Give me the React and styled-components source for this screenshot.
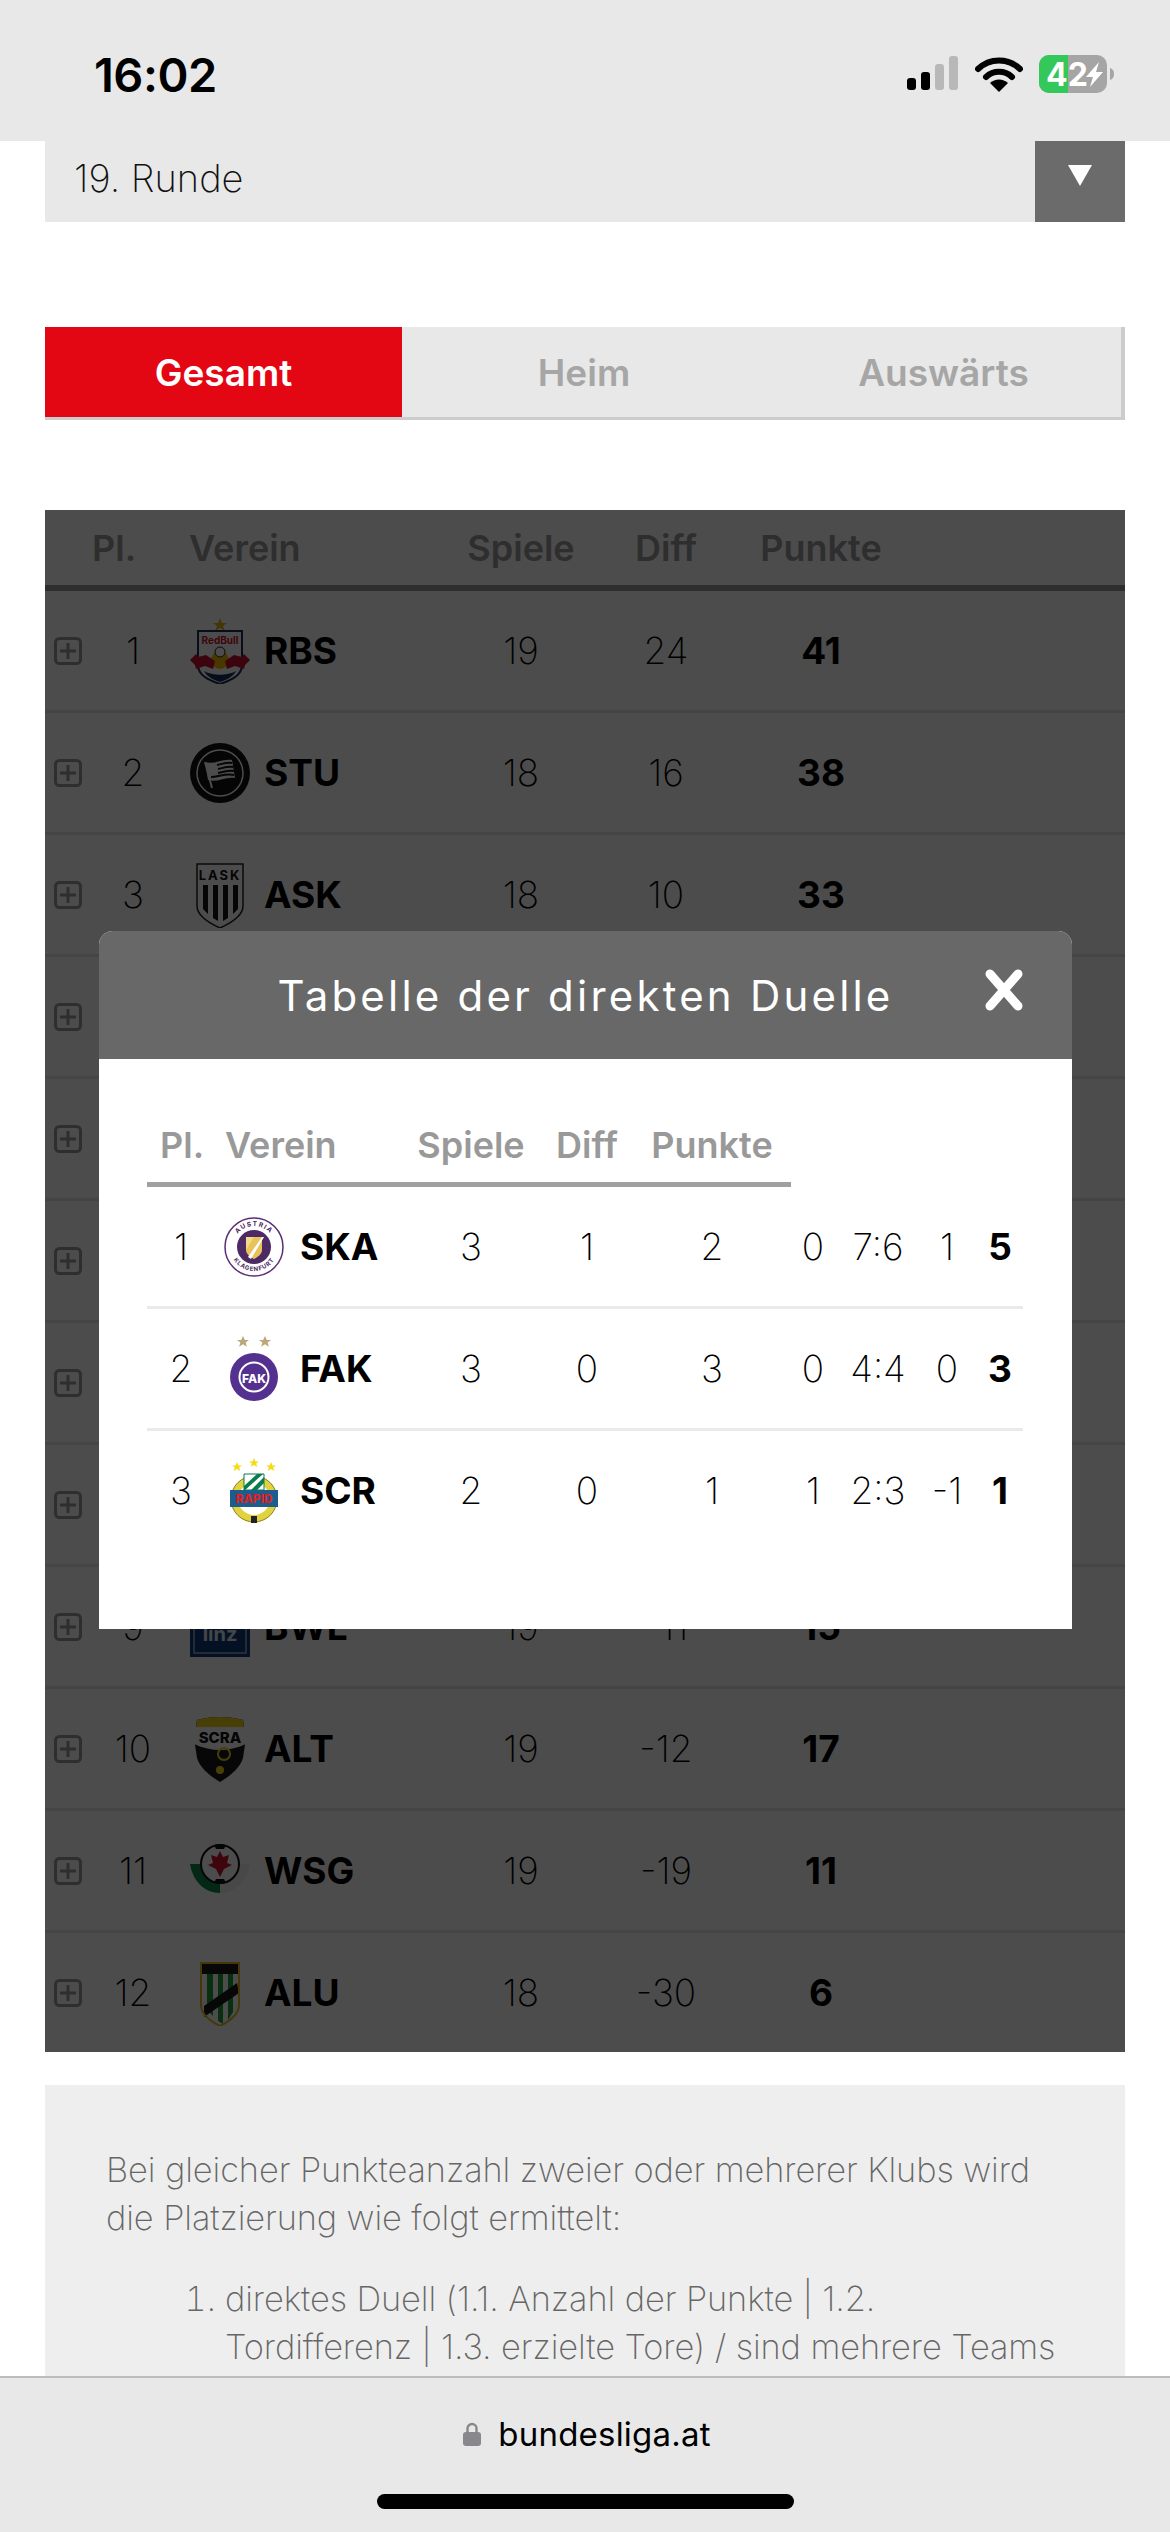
import styled, { createGlobalStyle } from "styled-components";

const GlobalStyle = createGlobalStyle`
  html, body {
    margin: 0;
    padding: 0;
    background: #fff;
    font-family: "Inter", "Liberation Sans", sans-serif;
  }
`;

const Page = styled.div`
  width: 1170px;
  height: 2532px;
  display: flex;
  flex-direction: column;
  overflow: hidden;
  background: #fff;
`;

const StatusBar = styled.div`
  flex: none;
  height: 134px;
  padding: 7px 55px 0 94px;
  display: flex;
  align-items: center;
  justify-content: space-between;
  background: #e8e8e8;
`;

const Clock = styled.div`
  font-size: 47px;
  font-weight: 600;
  color: #000;
  letter-spacing: -0.5px;
`;

const StatusIcons = styled.div`
  display: flex;
  align-items: center;
  gap: 16px;
`;

const Content = styled.div`
  flex: 1;
  min-height: 0;
  overflow: hidden;
  padding: 0 45px;
`;

const RoundSelect = styled.div`
  height: 81px;
  display: flex;
  align-items: center;
  justify-content: space-between;
  background: #e8e8e8;
  padding-left: 29px;
  font-size: 38px;
  font-weight: 250;
  color: #111;
`;

const RoundLabel = styled.span`
  margin-bottom: 8px;
`;

const SelectButton = styled.div`
  width: 90px;
  height: 100%;
  display: flex;
  align-items: flex-start;
  justify-content: center;
  padding-top: 24px;
  box-sizing: border-box;
  background: #6b6b6b;
  &::after {
    content: "";
    border-left: 12px solid transparent;
    border-right: 12px solid transparent;
    border-top: 21px solid #fff;
  }
`;

const Tabs = styled.div`
  margin-top: 105px;
  height: 93px;
  display: grid;
  grid-template-columns: 357px 364px 1fr;
  box-sizing: border-box;
  background: #e8e8e8;
  border-right: 4px solid #ccc;
  border-bottom: 3px solid #ccc;
`;

const Tab = styled.div`
  display: flex;
  align-items: center;
  justify-content: center;
  font-size: 37px;
  font-weight: 600;
  color: ${(p) => (p.$active ? "#fff" : "#a6a6a6")};
  background: ${(p) => (p.$active ? "#e30613" : "transparent")};
`;

const TableWrap = styled.div`
  position: relative;
  margin-top: 90px;
  background: #fff;
`;

const Overlay = styled.div`
  position: absolute;
  inset: 0;
  background: rgba(0, 0, 0, 0.7);
`;

const TableHead = styled.div`
  display: grid;
  grid-template-columns: 53px 70px 283px 140px 150px 160px 1fr;
  height: 75px;
  align-items: center;
  border-bottom: 6px solid #999;
  font-size: 36px;
  font-weight: 600;
  color: #999;
`;

const HeadRank = styled.div`
  grid-column: 1 / 3;
  padding-left: 47px;
`;

const HeadClub = styled.div`
  padding-left: 21px;
`;

const HeadCell = styled.div`
  display: flex;
  justify-content: center;
`;

const TableRow = styled.div`
  display: grid;
  grid-template-columns: 53px 70px 283px 140px 150px 160px 1fr;
  height: 119px;
  align-items: center;
  font-size: 37px;
  font-weight: 200;
  color: #000;
  border-bottom: ${(p) => (p.$last ? "0" : "3px solid #e8e8e8")};
`;

const Toggle = styled.svg`
  width: 28px;
  height: 28px;
  margin-left: 9px;
`;

const Cell = styled.div`
  display: flex;
  justify-content: center;
  white-space: nowrap;
`;

const Strong = styled(Cell)`
  font-weight: 700;
`;

const Club = styled.div`
  display: flex;
  align-items: center;
  gap: ${(p) => p.$gap}px;
  padding-left: ${(p) => p.$indent}px;
  font-weight: 700;
  font-size: 37px;
`;

const LogoBox = styled.svg`
  flex: none;
  width: 60px;
  height: 66px;
`;

const Modal = styled.div`
  position: absolute;
  top: 421px;
  left: 54px;
  width: 973px;
  height: 698px;
  background: #fff;
  border-radius: 14px 14px 0 0;
  overflow: hidden;
`;

const ModalHeader = styled.div`
  height: 128px;
  display: grid;
  grid-template-columns: 1fr auto 1fr;
  align-items: center;
  background: #686868;
  color: #fff;
  font-size: 42px;
  font-weight: 400;
  letter-spacing: 3.2px;
`;

const ModalTitle = styled.div`
  grid-column: 2;
  white-space: nowrap;
`;

const CloseIcon = styled.svg`
  grid-column: 3;
  justify-self: end;
  width: 40px;
  height: 42px;
  margin-right: 48px;
  margin-bottom: 10px;
`;

const ModalBody = styled.div`
  padding: 48px 49px 0 48px;
`;

const DuelHead = styled.div`
  width: 644px;
  height: 75px;
  display: grid;
  grid-template-columns: 68px 206px 100px 132px 118px;
  align-items: center;
  border-bottom: 5px solid #a0a0a0;
  font-size: 36px;
  font-weight: 600;
  color: #999;
`;

const DuelHeadRank = styled.div`
  padding-left: 13px;
`;

const DuelHeadClub = styled.div`
  padding-left: 10px;
`;

const DuelRow = styled.div`
  display: grid;
  grid-template-columns: 68px 206px 100px 132px 118px 84px 46px 92px 14px;
  height: 119px;
  align-items: center;
  font-size: 37px;
  font-weight: 200;
  color: #000;
  border-bottom: ${(p) => (p.$last ? "0" : "3px solid #eaeaea")};
`;

const RulesPanel = styled.div`
  margin-top: 33px;
  padding: 61px 40px 0 61px;
  height: 400px;
  background: #eee;
  font-size: 34.4px;
  font-weight: 200;
  line-height: 48px;
  letter-spacing: -0.1px;
  color: #666;
`;

const RulesText = styled.p`
  margin: 0;
`;

const RulesList = styled.ol`
  margin: 33px 0 0;
  padding-left: 119px;
`;

const BrowserBar = styled.div`
  flex: none;
  height: 154px;
  border-top: 2px solid #bdbdbd;
  background: #e8e8e8;
  display: flex;
  flex-direction: column;
  align-items: center;
`;

const Address = styled.div`
  margin-top: 36px;
  margin-left: 4px;
  display: flex;
  align-items: center;
  gap: 17px;
  font-size: 33px;
  font-weight: 400;
  color: #000;
  letter-spacing: 0.2px;
`;

const HomeIndicator = styled.div`
  margin-top: 40px;
  width: 417px;
  height: 15px;
  border-radius: 8px;
  background: #000;
`;

const SignalIcon = () => (
  <svg width="52" height="36" viewBox="0 0 52 36">
    <rect x="0" y="22" width="9" height="12" rx="3" fill="#000" />
    <rect x="14" y="16" width="9" height="18" rx="3" fill="#000" />
    <rect x="28" y="8" width="9" height="26" rx="3" fill="#b8b8b8" />
    <rect x="42" y="0" width="9" height="34" rx="3" fill="#b8b8b8" />
  </svg>
);

const WifiIcon = () => (
  <svg width="48" height="36" viewBox="0 0 48 36">
    <path d="M3 13a30 30 0 0 1 42 0" fill="none" stroke="#000" strokeWidth="6" strokeLinecap="round" />
    <path d="M11 21a19 19 0 0 1 26 0" fill="none" stroke="#000" strokeWidth="6" strokeLinecap="round" />
    <path d="M24 36l-9-9a13 13 0 0 1 18 0z" fill="#000" />
  </svg>
);

const BatteryIcon = () => (
  <svg width="76" height="38" viewBox="0 0 76 38">
    <rect x="0" y="0" width="68" height="38" rx="10" fill="#a5a5a5" />
    <path d="M10 0h19v38H10a10 10 0 0 1-10-10V10A10 10 0 0 1 10 0z" fill="#34c759" />
    <path d="M71 13c3 1 4 3 4 6s-1 5-4 6z" fill="#a5a5a5" />
    <text x="7" y="31" fontSize="32" fontWeight="700" fill="#fff" fontFamily="Inter, sans-serif">42</text>
    <path d="M60 7L47 22h7l-3 10 13-15h-7z" fill="#fff" />
  </svg>
);

const LockIcon = () => (
  <svg width="18" height="24" viewBox="0 0 18 24">
    <path d="M4.5 11V6.5a4.5 4.5 0 0 1 9 0V11" fill="none" stroke="#88888c" strokeWidth="2.4" />
    <rect x="0" y="10" width="18" height="14" rx="3" fill="#88888c" />
  </svg>
);

const RbsLogo = () => (
  <LogoBox viewBox="0 0 60 66">
    <path d="M30 0l2 5h5l-4 3 2 5-5-3-5 3 2-5-4-3h5z" fill="#e6b422" />
    <path d="M8 13h44v34c0 10-10 15-22 19C18 62 8 57 8 47z" fill="#fff" stroke="#1d2d5c" strokeWidth="2" />
    <text x="30" y="26" textAnchor="middle" fontSize="10" fontWeight="700" fill="#d0112b" fontFamily="Inter, sans-serif">RedBull</text>
    <circle cx="30" cy="42" r="9" fill="#f5b800" />
    <circle cx="30" cy="34" r="5" fill="#fff" stroke="#222" strokeWidth="1" />
    <path d="M0 42l6-6 2 3 8-2 9 6-2 8-8-3-9 3-1-4z" fill="#c8102e" />
    <path d="M60 42l-6-6-2 3-8-2-9 6 2 8 8-3 9 3 1-4z" fill="#c8102e" />
    <path d="M14 53c9 5 23 5 32 0-3 6-10 9-16 11-6-2-13-5-16-11z" fill="#1d2d5c" />
  </LogoBox>
);

const StuLogo = () => (
  <LogoBox viewBox="0 0 60 66">
    <circle cx="30" cy="33" r="30" fill="#111" />
    <circle cx="30" cy="33" r="23" fill="none" stroke="#fff" strokeWidth="1.5" />
    <path d="M15 22c9 3 18-4 27-2l3 18c-9-2-18 5-27 2z" fill="#fff" />
    <path d="M27 25c5-1 10-3 15-2M28 29c5-1 10-3 15-2M28 33c5-1 11-3 16-2M21 37c7 0 15-4 23-2" stroke="#111" strokeWidth="2" fill="none" />
    <path d="M15 22l7 26" stroke="#fff" strokeWidth="2" />
  </LogoBox>
);

const AskLogo = () => (
  <LogoBox viewBox="0 0 60 66">
    <path d="M7 2h46v42c0 9-12 17-23 22C19 61 7 53 7 44z" fill="#fff" stroke="#222" strokeWidth="1.5" />
    <text x="30" y="18" textAnchor="middle" fontSize="13" fontWeight="700" letterSpacing="2" fill="#111" fontFamily="Inter, sans-serif">LASK</text>
    <path d="M13 23h5v29l-5-5zM23 23h5v36l-5-3zM33 23h5v33l-5 3zM43 23h5v24l-5 5z" fill="#111" />
  </LogoBox>
);

const BwlLogo = () => (
  <LogoBox viewBox="0 0 60 66">
    <rect x="0" y="3" width="60" height="60" fill="#0f3b7d" />
    <rect x="4" y="7" width="52" height="52" fill="none" stroke="#dfe8f3" strokeWidth="1" />
    <text x="30" y="47" textAnchor="middle" fontSize="20" fontWeight="700" fill="#dfe8f3" fontFamily="Inter, sans-serif">linz</text>
  </LogoBox>
);

const AltLogo = () => (
  <LogoBox viewBox="0 0 60 66">
    <path d="M7 4c15-4 31-4 46 0l3 18-3 20c-3 10-13 18-23 24C20 60 10 52 7 42L4 22z" fill="#181818" />
    <path d="M7 4c15-4 31-4 46 0l1 7H6z" fill="#f2d21b" />
    <path d="M4 11h52v17C38 36 22 36 4 28z" fill="#fff" />
    <text x="30" y="27" textAnchor="middle" fontSize="15" fontWeight="800" fill="#111" fontFamily="Inter, sans-serif">SCRA</text>
    <circle cx="34" cy="38" r="6" fill="none" stroke="#f2d21b" strokeWidth="2" />
    <circle cx="30" cy="54" r="4" fill="#f2d21b" />
  </LogoBox>
);

const WsgLogo = () => (
  <LogoBox viewBox="0 0 60 66">
    <path d="M0 26c3 18 15 29 30 29V26z" fill="#0a8a4a" />
    <path d="M60 26c-3 18-15 29-30 29V26z" fill="#f2f2f2" />
    <circle cx="30" cy="26" r="19" fill="#fff" stroke="#111" strokeWidth="2" />
    <path d="M30 13l3 6 6-2-2 8 5 2-8 4-4 8-4-8-8-4 5-2-2-8 6 2z" fill="#d0112b" />
    <path d="M24 7l6-1 6 1-2 4h-8zM24 45l6 1 6-1-2-4h-8z" fill="#111" />
  </LogoBox>
);

const AluLogo = () => (
  <LogoBox viewBox="0 0 60 66">
    <path d="M11 3h38v42c0 9-9 16-19 21C20 61 11 54 11 45z" fill="#fff" />
    <path d="M17 14h6v42l-6-6zM28 14h5v50l-5-3zM38 14h5v38l-5 8z" fill="#1f9e3a" />
    <path d="M11 3h38v11H11z" fill="#181818" />
    <path d="M14 46l33-23 2 10-35 24z" fill="#181818" />
    <path d="M11 3h38v42c0 9-9 16-19 21C20 61 11 54 11 45z" fill="none" stroke="#e8b81c" strokeWidth="2" />
  </LogoBox>
);

const SkaLogo = () => (
  <LogoBox viewBox="0 0 60 66">
    <circle cx="30" cy="33" r="29" fill="#fff" stroke="#5a2f73" strokeWidth="1.5" />
    <defs>
      <path id="skaTop" d="M9 33a21 21 0 0 1 42 0" />
      <path id="skaBottom" d="M6 33a24 24 0 0 0 48 0" />
    </defs>
    <text fontSize="6.5" fontWeight="700" letterSpacing="1.2" fill="#4d2a63" fontFamily="Inter, sans-serif">
      <textPath href="#skaTop" startOffset="50%" textAnchor="middle">AUSTRIA</textPath>
    </text>
    <text fontSize="6" fontWeight="700" letterSpacing="0.8" fill="#4d2a63" fontFamily="Inter, sans-serif">
      <textPath href="#skaBottom" startOffset="50%" textAnchor="middle">KLAGENFURT</textPath>
    </text>
    <circle cx="30" cy="33" r="17" fill="#4d2a63" />
    <path d="M22 23h16v13c0 4-4 7-8 9-4-2-8-5-8-9z" fill="#e9c25a" />
    <path d="M24 43l14-20h2L27 45z" fill="#fff" />
    <path d="M22 23h8L22 36z" fill="#f3d98a" />
  </LogoBox>
);

const FakLogo = () => (
  <LogoBox viewBox="0 0 60 66">
    <path d="M19 0l1.8 4H25l-3.4 2.6 1.3 4.2L19 8.3l-3.9 2.5 1.3-4.2L13 4h4.2zM41 0l1.8 4H47l-3.4 2.6 1.3 4.2L41 8.3l-3.9 2.5 1.3-4.2L35 4h4.2z" fill="#bba77a" />
    <circle cx="30" cy="41" r="24" fill="#54318f" />
    <circle cx="30" cy="41" r="15.5" fill="#fff" />
    <circle cx="30" cy="41" r="13.5" fill="#54318f" />
    <text x="30" y="47" textAnchor="middle" fontSize="12" fontWeight="800" fill="#fff" fontFamily="Inter, sans-serif">FAK</text>
  </LogoBox>
);

const ScrLogo = () => (
  <LogoBox viewBox="0 0 60 66">
    <path d="M13 4l1.5 3.4H18l-2.8 2.2 1 3.4-3.2-2-3.2 2 1-3.4L8 7.4h3.5zM30 0l1.5 3.4H35l-2.8 2.2 1 3.4-3.2-2-3.2 2 1-3.4L25 3.4h3.5zM47 4l1.5 3.4H52l-2.8 2.2 1 3.4-3.2-2-3.2 2 1-3.4L42 7.4h3.5z" fill="#f2dc1a" />
    <circle cx="30" cy="41" r="23" fill="#e2d23e" stroke="#8a7d1e" strokeWidth="1" />
    <circle cx="30" cy="41" r="16" fill="#fff" />
    <path d="M20 16h20v16H20z" fill="#fff" stroke="#0a7d4d" strokeWidth="1" />
    <path d="M20 28L33 16h6L20 33zM27 32l13-13v6l-7 7z" fill="#0a7d4d" />
    <rect x="6" y="32" width="48" height="17" fill="#1c5d8e" />
    <text x="30" y="45" textAnchor="middle" fontSize="12" fontWeight="800" fill="#e02020" fontFamily="Inter, sans-serif">RAPID</text>
    <rect x="27" y="58" width="6" height="7" fill="#222" />
  </LogoBox>
);

const logos = {
  RBS: RbsLogo,
  STU: StuLogo,
  ASK: AskLogo,
  BWL: BwlLogo,
  ALT: AltLogo,
  WSG: WsgLogo,
  ALU: AluLogo,
  SKA: SkaLogo,
  FAK: FakLogo,
  SCR: ScrLogo,
};

// rows 4 to 8 sit behind the dialog, only their toggles can be seen
const standings = [
  { rank: 1, club: "RBS", games: 19, diff: 24, points: 41 },
  { rank: 2, club: "STU", games: 18, diff: 16, points: 38 },
  { rank: 3, club: "ASK", games: 18, diff: 10, points: 33 },
  { id: 4 },
  { id: 5 },
  { id: 6 },
  { id: 7 },
  { id: 8 },
  { rank: 9, club: "BWL", games: 19, diff: -11, points: 15 },
  { rank: 10, club: "ALT", games: 19, diff: -12, points: 17 },
  { rank: 11, club: "WSG", games: 19, diff: -19, points: 11 },
  { rank: 12, club: "ALU", games: 18, diff: -30, points: 6 },
];

const duels = [
  { rank: 1, club: "SKA", games: 3, s: 1, u: 2, n: 0, goals: "7:6", diff: 1, points: 5 },
  { rank: 2, club: "FAK", games: 3, s: 0, u: 3, n: 0, goals: "4:4", diff: 0, points: 3 },
  { rank: 3, club: "SCR", games: 2, s: 0, u: 1, n: 1, goals: "2:3", diff: -1, points: 1 },
];

const ClubLabel = ({ club, gap, indent }) => {
  const Logo = logos[club];
  return (
    <Club $gap={gap} $indent={indent}>
      {Logo && <Logo />}
      {club}
    </Club>
  );
};

const App = () => {
  return (
    <Page>
      <GlobalStyle />
      <StatusBar>
        <Clock>16:02</Clock>
        <StatusIcons>
          <SignalIcon />
          <WifiIcon />
          <BatteryIcon />
        </StatusIcons>
      </StatusBar>
      <Content>
        <RoundSelect>
          <RoundLabel>19. Runde</RoundLabel>
          <SelectButton />
        </RoundSelect>
        <Tabs>
          <Tab $active>Gesamt</Tab>
          <Tab>Heim</Tab>
          <Tab>Auswärts</Tab>
        </Tabs>
        <TableWrap>
          <TableHead>
            <HeadRank>Pl.</HeadRank>
            <HeadClub>Verein</HeadClub>
            <HeadCell>Spiele</HeadCell>
            <HeadCell>Diff</HeadCell>
            <HeadCell>Punkte</HeadCell>
          </TableHead>
          {standings.map((row, i) => (
            <TableRow key={i} $last={i === standings.length - 1}>
              <Toggle viewBox="0 0 28 28">
                <rect x="1.5" y="1.5" width="25" height="25" rx="4" fill="none" stroke="#999" strokeWidth="3" />
                <path d="M6 14h16M14 6v16" stroke="#999" strokeWidth="3" />
              </Toggle>
              {row.rank && (
                <>
                  <Cell>{row.rank}</Cell>
                  <ClubLabel club={row.club} gap={14} indent={22} />
                  <Cell>{row.games}</Cell>
                  <Cell>{row.diff}</Cell>
                  <Strong>{row.points}</Strong>
                </>
              )}
            </TableRow>
          ))}
          <Overlay />
          <Modal>
            <ModalHeader>
              <ModalTitle>Tabelle der direkten Duelle</ModalTitle>
              <CloseIcon viewBox="0 0 40 42">
                <path d="M6 5l28 32M34 5L6 37" stroke="#fff" strokeWidth="9" strokeLinecap="round" />
              </CloseIcon>
            </ModalHeader>
            <ModalBody>
              <DuelHead>
                <DuelHeadRank>Pl.</DuelHeadRank>
                <DuelHeadClub>Verein</DuelHeadClub>
                <HeadCell>Spiele</HeadCell>
                <HeadCell>Diff</HeadCell>
                <HeadCell>Punkte</HeadCell>
              </DuelHead>
              {duels.map((row, i) => (
                <DuelRow key={row.rank} $last={i === duels.length - 1}>
                  <Cell>{row.rank}</Cell>
                  <ClubLabel club={row.club} gap={16} indent={9} />
                  <Cell>{row.games}</Cell>
                  <Cell>{row.s}</Cell>
                  <Cell>{row.u}</Cell>
                  <Cell>{row.n}</Cell>
                  <Cell>{row.goals}</Cell>
                  <Cell>{row.diff}</Cell>
                  <Strong>{row.points}</Strong>
                </DuelRow>
              ))}
            </ModalBody>
          </Modal>
        </TableWrap>
        <RulesPanel>
          <RulesText>
            Bei gleicher Punkteanzahl zweier oder mehrerer Klubs wird
            <br />
            die Platzierung wie folgt ermittelt:
          </RulesText>
          <RulesList>
            <li>
              direktes Duell (1.1. Anzahl der Punkte | 1.2.
              <br />
              Tordifferenz | 1.3. erzielte Tore) / sind mehrere Teams
            </li>
          </RulesList>
        </RulesPanel>
      </Content>
      <BrowserBar>
        <Address>
          <LockIcon />
          bundesliga.at
        </Address>
        <HomeIndicator />
      </BrowserBar>
    </Page>
  );
};

export default App;
